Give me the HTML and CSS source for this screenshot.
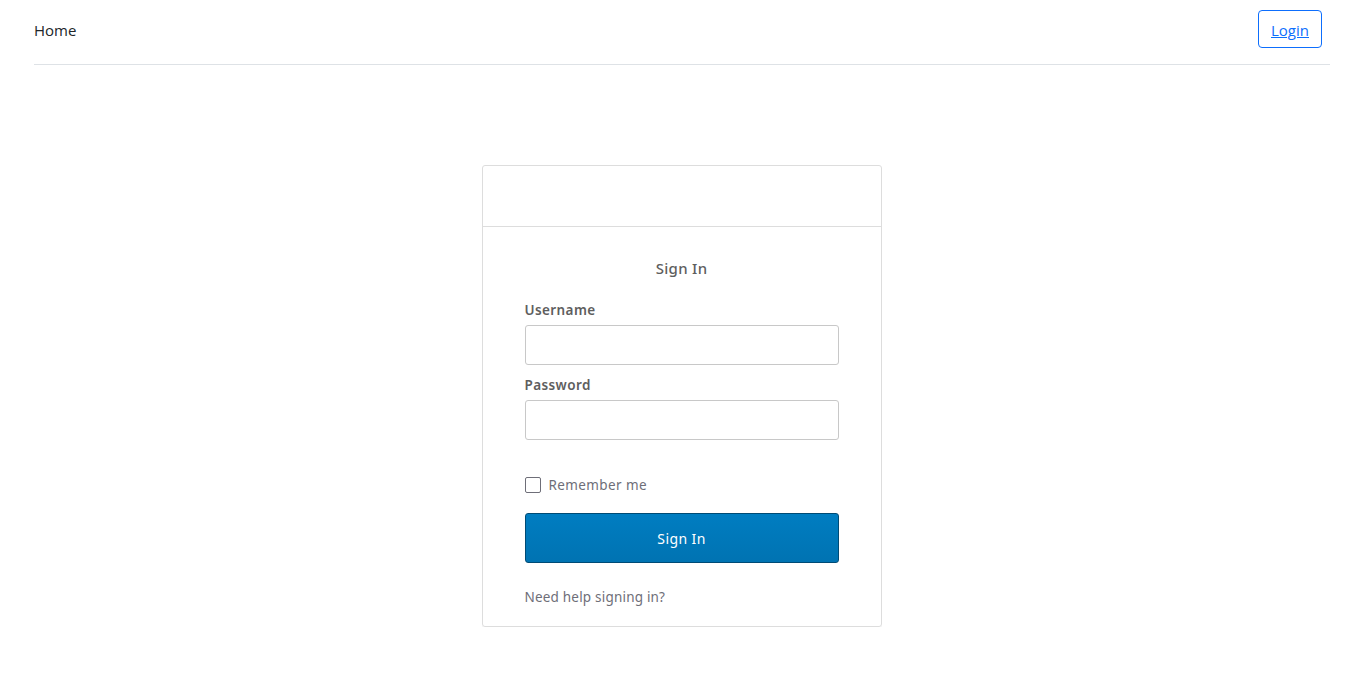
FILE: index.html
```html
<!DOCTYPE html>
<html lang="en">
<head>
<meta charset="utf-8">
<title>Sign In</title>
<link rel="stylesheet" href="styles.css">
</head>
<body>
<header class="topbar">
  <a class="home" href="#">Home</a>
  <a class="login" href="#">Login</a>
</header>
<main class="page">
  <div class="card">
    <div class="card-head"></div>
    <form class="card-body">
      <h2 class="title">Sign In</h2>
      <label class="field-label" for="u">Username</label>
      <input class="field" id="u" type="text">
      <label class="field-label pw" for="p">Password</label>
      <input class="field" id="p" type="password">
      <label class="remember"><span class="box"></span>Remember me</label>
      <button class="submit" type="button">Sign In</button>
      <a class="help" href="#">Need help signing in?</a>
    </form>
  </div>
</main>
</body>
</html>
```
FILE: styles.css
```css
* { box-sizing: border-box; }
html, body { margin: 0; padding: 0; background: #fff; }
body { font-family: "Noto Sans", "Open Sans", sans-serif; }

.topbar {
  display: flex;
  align-items: center;
  justify-content: space-between;
  margin: 0 27px 0 34px;
  padding: 10px 8px 16px 0;
  border-bottom: 1px solid #dee2e6;
  font-family: "Open Sans", "Noto Sans", sans-serif;
}
.home {
  padding-top: 2px;
  color: #212529;
  text-decoration: none;
  font-size: 15px;
}
.login {
  display: block;
  height: 38px;
  line-height: 38px;
  padding: 0 12px;
  border: 1px solid #0d6efd;
  border-radius: 4px;
  color: #0d6efd;
  font-size: 15px;
  text-decoration: underline;
  overflow: hidden;
}

.page { display: flex; justify-content: center; padding: 100px 0 0 6px; }
.card {
  width: 400px;
  border: 1px solid #ddd;
  border-radius: 3px;
  box-shadow: 0 2px 0 rgba(175,175,175,0.12);
}
.card-head { height: 61px; border-bottom: 1px solid #ddd; }
.card-body {
  display: flex;
  flex-direction: column;
  padding: 31px 42px 20px;
  margin: 0;
}
.title {
  margin: 0;
  text-align: center;
  font-size: 15px;
  font-weight: 500;
  line-height: 20px;
  letter-spacing: 0.3px;
  color: #5e5e5e;
}
.field-label {
  margin-top: 23px;
  font-size: 13.5px;
  font-weight: 600;
  line-height: 18px;
  letter-spacing: 0.4px;
  color: #5e5e5e;
}
.field-label.pw { margin-top: 11px; }
.field {
  margin-top: 6px;
  height: 40px;
  width: 314px;
  border: 1px solid #c8c8c8;
  border-radius: 3px;
  font: inherit;
}
.remember {
  display: flex;
  align-items: center;
  margin-top: 37px;
  height: 16px;
  font-size: 13.5px;
  letter-spacing: 0.4px;
  color: #6e6e78;
}
.box {
  width: 16px;
  height: 16px;
  margin-right: 8px;
  border: 1px solid #6e6e78;
  border-radius: 2px;
  background: #fff;
}
.submit {
  margin-top: 20px;
  height: 50px;
  width: 314px;
  border: 1px solid #004b75;
  border-radius: 3px;
  background: linear-gradient(#007dc1, #0073b2);
  color: #fff;
  font-family: inherit;
  font-size: 14px;
  letter-spacing: 0.4px;
}
.help {
  margin-top: 25px;
  font-size: 13.5px;
  line-height: 18px;
  letter-spacing: 0.2px;
  color: #6e6e78;
  text-decoration: none;
}
```
